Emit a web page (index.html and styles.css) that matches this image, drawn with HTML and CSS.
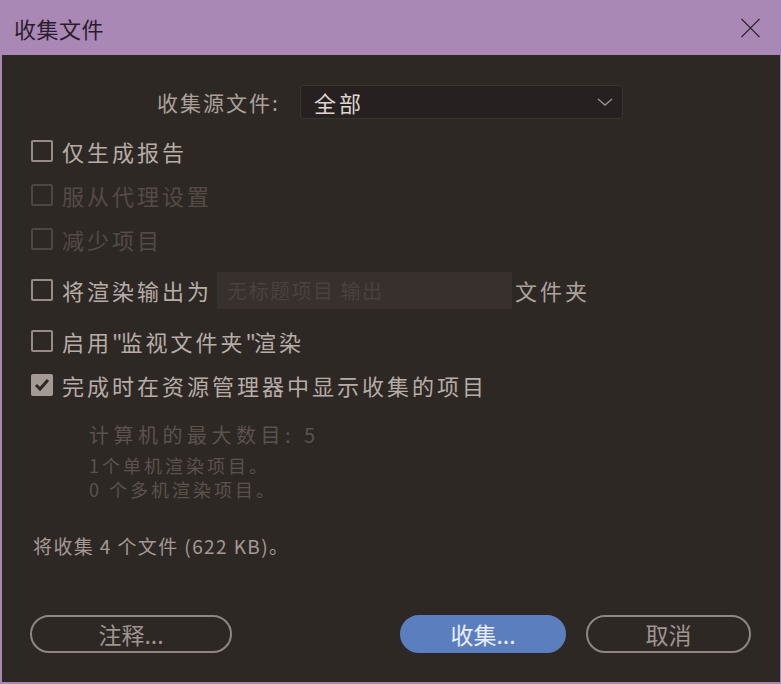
FILE: index.html
```html
<!DOCTYPE html>
<html>
<head>
    <meta charset="utf-8">
    <title>收集文件</title>
    <link rel="stylesheet" href="styles.css">
</head>
<body>
    <div class="dialog">
        <div class="titlebar">
            <span class="title">收集文件</span>
            <svg class="close" width="22" height="22" viewBox="0 0 22 22">
                <path d="M1 1 L21 21 M21 1 L1 21" stroke="#2b1c2c" stroke-width="1.4" fill="none"/>
            </svg>
        </div>

        <div class="content">
            <div class="source-row">
                <label class="source-label">收集源文件:</label>
                <div class="select">
                    <span>全部</span>
                    <svg width="16" height="8" viewBox="0 0 16 8">
                        <path d="M1 1 L8 7 L15 1" stroke="#9a918c" stroke-width="1.4" fill="none"/>
                    </svg>
                </div>
            </div>

            <div class="check-row">
                <span class="box"></span>
                <span class="check-text">仅生成报告</span>
            </div>
            <div class="check-row disabled">
                <span class="box"></span>
                <span class="check-text">服从代理设置</span>
            </div>
            <div class="check-row disabled">
                <span class="box"></span>
                <span class="check-text">减少项目</span>
            </div>
            <div class="check-row output-row">
                <span class="box"></span>
                <span class="check-text">将渲染输出为</span>
                <div class="text-input">无标题项目 输出</div>
                <span class="check-text after">文件夹</span>
            </div>
            <div class="check-row watch-row">
                <span class="box"></span>
                <span class="check-text">启用<span class="quote">"</span>监视文件夹<span class="quote">"</span>渲染</span>
            </div>
            <div class="check-row">
                <span class="box checked">
                    <svg width="16" height="14" viewBox="0 0 16 14">
                        <path d="M2 7 L6 11 L14 2" stroke="#2e2825" stroke-width="3" fill="none"/>
                    </svg>
                </span>
                <span class="check-text">完成时在资源管理器中显示收集的项目</span>
            </div>

            <div class="info">
                <div class="info-main">计算机的最大数目: 5</div>
                <div class="info-line">1个单机渲染项目。</div>
                <div class="info-line">0 个多机渲染项目。</div>
            </div>

            <div class="summary">将收集 4 个文件 (622 KB)。</div>

            <div class="buttons">
                <button class="btn btn-notes">注释...</button>
                <button class="btn btn-primary">收集...</button>
                <button class="btn btn-cancel">取消</button>
            </div>
        </div>
    </div>
</body>
</html>
```

FILE: styles.css
```css
body {
    margin: 0;
    padding: 0;
    background-color: #a988b5;
    font-family: "Noto Sans CJK SC", "Liberation Sans", sans-serif;
}

.dialog {
    width: 778px;
    height: 682px;
    margin-left: 2px;
    background-color: #2e2825;
    display: flex;
    flex-direction: column;
}

.titlebar {
    height: 55px;
    margin-left: -2px;
    margin-right: -1px;
    background-color: #a988b5;
    display: flex;
    align-items: center;
    justify-content: space-between;
    padding: 0 20px 0 14px;
}

.title {
    font-size: 22px;
    letter-spacing: 0.5px;
    color: #2b1c2c;
}

.close {
    margin-top: 1px;
    width: 21px;
    height: 20px;
}

.content {
    flex: 1;
    padding: 30px 0 0 29px;
    display: flex;
    flex-direction: column;
}

.source-row {
    display: flex;
    align-items: center;
    height: 34px;
    padding-left: 126px;
    margin-bottom: 10px;
}

.source-label {
    font-size: 21px;
    letter-spacing: 2px;
    color: #aaa19b;
    width: 143px;
}

.select {
    width: 323px;
    height: 34px;
    box-sizing: border-box;
    background-color: #262120;
    border: 1px solid #3a3431;
    border-radius: 3px;
    display: flex;
    align-items: center;
    justify-content: space-between;
    padding: 0 9px 0 13px;
    font-size: 22px;
    letter-spacing: 3px;
    color: #ddd6d0;
}

.check-row {
    display: flex;
    align-items: center;
    height: 44px;
}

.output-row {
    margin-top: 7px;
}

.watch-row {
    margin-top: 7px;
}

.box {
    width: 18px;
    height: 18px;
    border: 2px solid #958c87;
    border-radius: 2px;
    margin-right: 9px;
    display: flex;
    align-items: center;
    justify-content: center;
}

.box.checked {
    background-color: #a39a96;
    border-color: #a39a96;
}

.check-text {
    font-size: 22px;
    letter-spacing: 3px;
    color: #b6ada7;
    white-space: nowrap;
}

.quote {
    letter-spacing: -2px;
}

.disabled .box {
    border-color: #4e4643;
}

.disabled .check-text {
    color: #544b47;
}

.text-input {
    width: 285px;
    height: 37px;
    margin-left: 5px;
    margin-right: 3px;
    padding-left: 10px;
    background-color: #37302d;
    display: flex;
    align-items: center;
    font-size: 20px;
    letter-spacing: 1.5px;
    color: #4a423e;
    white-space: nowrap;
}

.check-text.after {
    color: #aca39d;
}

.info {
    margin-top: 15px;
    padding-left: 58px;
    color: #5b524e;
}

.info-main {
    height: 26px;
    line-height: 26px;
    font-size: 20px;
    letter-spacing: 4.5px;
}

.info-line {
    height: 24px;
    line-height: 24px;
    font-size: 18px;
    letter-spacing: 3px;
}

.info-main + .info-line {
    margin-top: 5px;
}

.summary {
    margin-top: 32px;
    padding-left: 2px;
    height: 26px;
    line-height: 26px;
    font-size: 19px;
    letter-spacing: 1.4px;
    color: #a39a95;
}

.buttons {
    margin-top: 56px;
    margin-left: -1px;
    display: flex;
    align-items: center;
}

.btn {
    height: 38px;
    border-radius: 19px;
    border: 2px solid #8f8681;
    background: transparent;
    font-family: "Noto Sans CJK SC", "Liberation Sans", sans-serif;
    font-size: 23px;
    color: #9e9590;
    padding: 0;
}

.btn-notes {
    width: 202px;
}

.btn-primary {
    width: 166px;
    margin-left: 168px;
    background-color: #5b7fbe;
    border-color: #5b7fbe;
    color: #e9eef8;
}

.btn-cancel {
    width: 165px;
    margin-left: 20px;
}
```
